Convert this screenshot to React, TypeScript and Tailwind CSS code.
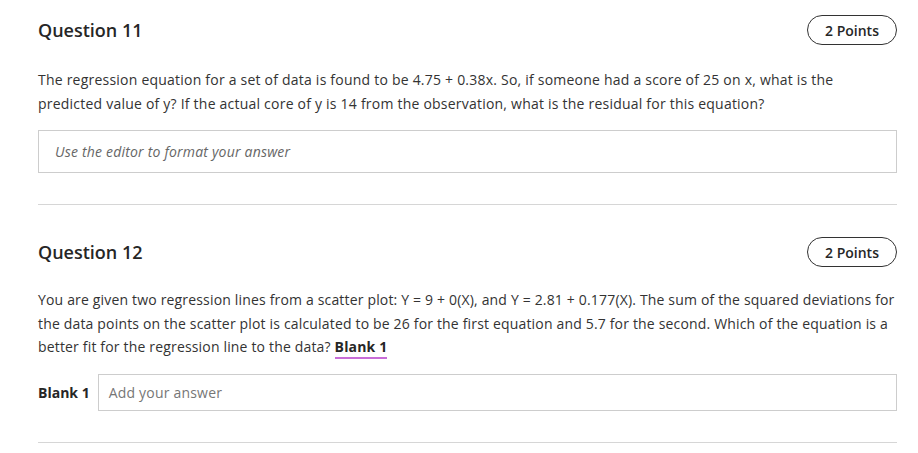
import React from 'react';

const PointsPill: React.FC<{ points: number }> = ({ points }) => (
  <span className="inline-flex items-center justify-center h-[30px] w-[90px] rounded-full border border-[#333] text-[14px] font-semibold text-[#262626]">
    {points} Points
  </span>
);

export default function App() {
  return (
    <div
      className="min-h-screen bg-white pl-[38px] pr-[21px] text-[#333]"
      style={{ fontFamily: '"Open Sans", "Liberation Sans", sans-serif' }}
    >
      <section className="pt-[15px]">
        <div className="flex justify-between items-center h-[30px]">
          <h2 className="text-[18px] font-semibold text-[#262626]">Question 11</h2>
          <PointsPill points={2} />
        </div>
        <p className="mt-[23px] text-[14px] leading-[24px] tracking-[0.22px]">
          The regression equation for a set of data is found to be 4.75 + 0.38x. So, if someone had a score of 25 on x, what is the predicted value of y? If the actual core of y is 14 from the observation, what is the residual for this equation?
        </p>
        <div className="mt-[14px] h-[43px] border border-[#cdcdcd] flex items-center px-[16px]">
          <span className="text-[14px] italic text-[#666] tracking-[0.2px]">Use the editor to format your answer</span>
        </div>
        <div className="mt-[31px] border-t border-[#d6d6d6]" />
      </section>

      <section className="pt-[32px]">
        <div className="flex justify-between items-center h-[30px]">
          <h2 className="text-[18px] font-semibold text-[#262626]">Question 12</h2>
          <PointsPill points={2} />
        </div>
        <p className="mt-[21px] text-[14px] leading-[23.5px] tracking-[0.17px]">
          You are given two regression lines from a scatter plot: Y = 9 + 0(X), and Y = 2.81 + 0.177(X). The sum of the squared deviations for the data points on the scatter plot is calculated to be 26 for the first equation and 5.7 for the second. Which of the equation is a better fit for the regression line to the data?{' '}
          <span className="font-bold text-[#262626] border-b-2 border-[#c86dd7] pb-[1px]">Blank 1</span>
        </p>
        <div className="mt-[15px] flex items-center gap-[8px]">
          <span className="shrink-0 whitespace-nowrap text-[14px] font-bold text-[#262626]">Blank 1</span>
          <div className="flex-1 h-[37px] border border-[#cdcdcd] flex items-center px-[10px]">
            <span className="text-[14px] text-[#767676] tracking-[0.2px]">Add your answer</span>
          </div>
        </div>
        <div className="mt-[31px] border-t border-[#d6d6d6]" />
      </section>
    </div>
  );
}
